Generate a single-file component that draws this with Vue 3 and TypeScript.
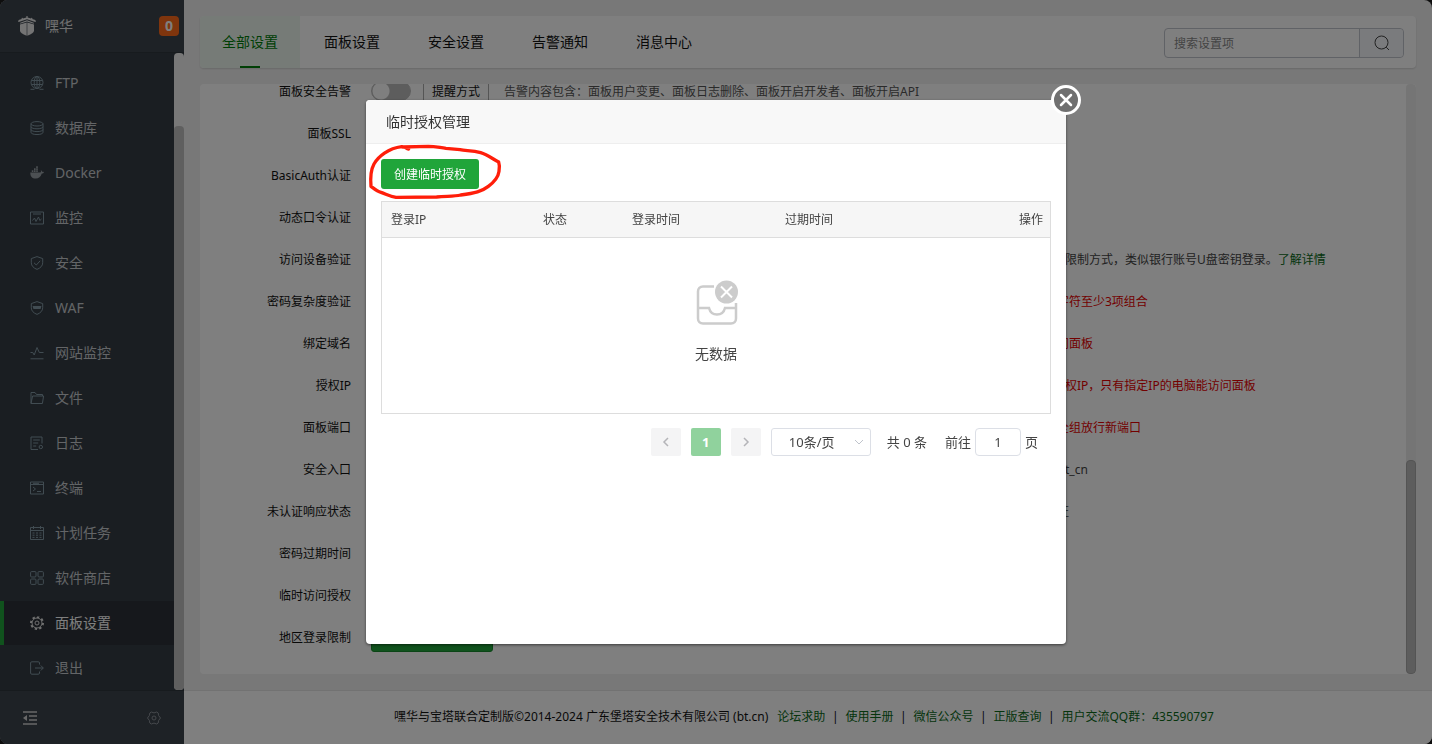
<script setup lang="ts">
import { ref } from 'vue'

interface MenuItem { label: string; icon: string; active?: boolean }
interface Row {
  label: string
  hint?: string
  tone?: 'red' | 'plain'
  link?: string
  wide?: boolean
  kind?: 'alarm' | 'region'
}

const menu: MenuItem[] = [
  { label: 'FTP', icon: 'ftp' },
  { label: '数据库', icon: 'db' },
  { label: 'Docker', icon: 'docker' },
  { label: '监控', icon: 'monitor' },
  { label: '安全', icon: 'safe' },
  { label: 'WAF', icon: 'waf' },
  { label: '网站监控', icon: 'pulse' },
  { label: '文件', icon: 'folder' },
  { label: '日志', icon: 'log' },
  { label: '终端', icon: 'terminal' },
  { label: '计划任务', icon: 'calendar' },
  { label: '软件商店', icon: 'store' },
  { label: '面板设置', icon: 'gear', active: true },
  { label: '退出', icon: 'exit' },
]

const tabs = ['全部设置', '面板设置', '安全设置', '告警通知', '消息中心']

const rows: Row[] = [
  { label: '面板安全告警', kind: 'alarm' },
  { label: '面板SSL' },
  { label: 'BasicAuth认证' },
  { label: '动态口令认证' },
  { label: '访问设备验证', hint: '限制方式，类似银行账号U盘密钥登录。', link: '了解详情', wide: true },
  { label: '密码复杂度验证', hint: '字符至少3项组合', tone: 'red' },
  { label: '绑定域名', hint: '问面板', tone: 'red' },
  { label: '授权IP', hint: '权IP，只有指定IP的电脑能访问面板', tone: 'red', wide: true },
  { label: '面板端口', hint: '全组放行新端口', tone: 'red' },
  { label: '安全入口', hint: 't_cn', wide: true },
  { label: '未认证响应状态', hint: '证' },
  { label: '密码过期时间' },
  { label: '临时访问授权' },
  { label: '地区登录限制', kind: 'region' },
]

const footerLinks = ['论坛求助', '使用手册', '微信公众号', '正版查询', '用户交流QQ群：435590797']
const pageSize = ref('10条/页')
const pageNo = ref('1')
const keyword = ref('')
const alarm = ref(false)
</script>

<template>
  <div class="app">
    <aside class="side">
      <header class="brand">
        <svg class="logo" viewBox="0 0 18 20" aria-hidden="true">
          <path d="M8.400 0h1.200v1.600l3.400 1 .6-.9.900.4-.3 1 3.200 1 .5 1.900-1.400-.3L9 3.200 1.500 5.700.1 6l.5-1.900 3.200-1-.3-1 .9-.4.6.9 3.400-1z" />
          <path d="M2.200 6.700L9 4.200l6.800 2.500v1L9 5.400 2.200 7.700z" />
          <path d="M2 8.600l6.700-2.200v13.400C4.300 17.900 2 16.800 2 14.800zM9.300 6.400L16 8.600v6.200c0 2-2.300 3.100-6.700 5z" />
        </svg>
        <span class="brand-name">嘿华</span>
        <span class="badge">0</span>
      </header>
      <div class="menu-wrap">
        <nav class="menu">
          <a v-for="m in menu" :key="m.label" href="#" class="item" :class="{ active: m.active }">
            <svg class="ico" viewBox="0 0 14 14" aria-hidden="true">
              <g v-if="m.icon === 'ftp'">
                <circle cx="7" cy="6.500" r="6" /><ellipse cx="7" cy="6.500" rx="2.800" ry="6" />
                <path d="M1.500 4.500h11M1.500 8.500h11M7 .5v12M.5 13.300h4M9.500 13.300h4" />
              </g>
              <g v-else-if="m.icon === 'db'">
                <ellipse cx="7" cy="2.800" rx="6" ry="2.200" />
                <path d="M1 2.800v8.500c0 3 12 3 12 0V2.800M1 5.700c0 2.800 12 2.800 12 0M1 8.500c0 2.800 12 2.800 12 0" />
              </g>
              <g v-else-if="m.icon === 'docker'" class="solid">
                <path d="M.3 6.500h9.900c.8-.2 1-1 .6-2.300.9.400 1.300 1 1.300 1.700.700-.200 1.300 0 1.900.300-.400.900-1.200 1.300-2.200 1.300C10.700 11 8.700 12.500 5.800 12.500 2 12.500.3 10.500.3 6.500z" />
                <path d="M1.800 4.300h1.600v1.600H1.800zM4 4.300h1.600v1.600H4zM6.200 4.300h1.600v1.600H6.200zM4 2.300h1.600v1.600H4zM6.200 2.300h1.600v1.600H6.200zM6.200.3h1.600v1.600H6.200z" />
              </g>
              <g v-else-if="m.icon === 'monitor'">
                <path d="M.5 1h13v12H.5zM3 3h8M2.500 9.500l2-2.500 1.500 3.500 2.500-4.500 1.300 3.500L11.500 8" />
              </g>
              <g v-else-if="m.icon === 'safe'">
                <path d="M7 .6l5.700 2v4.200c0 3-2.200 5.200-5.700 6.600C3.500 12 1.300 9.800 1.300 6.800V2.600zM4 6.800L6.300 9l3.900-4.200" />
              </g>
              <g v-else-if="m.icon === 'waf'">
                <path d="M7 .6l5.700 2v4.200c0 3-2.200 5.200-5.700 6.600C3.500 12 1.300 9.800 1.300 6.800V2.600z" />
                <path d="M3 5.500h8M3.500 7.500h7M3 5.500l1 2 1-2 1 2 1-2 1 2 1-2 1 2 1-2" />
              </g>
              <g v-else-if="m.icon === 'pulse'">
                <path d="M.5 6.500h2.300L4.200 9 7 1.500l2.300 5h4.200M.5 12.800h13" />
              </g>
              <g v-else-if="m.icon === 'folder'">
                <path d="M1 12.500V1.500h4l1.500 2h6V5M1 12.500L2.600 5h11l-1.200 7.500z" />
              </g>
              <g v-else-if="m.icon === 'log'">
                <path d="M12 7.500V1H1v12.500h7M3.200 4h6.600M3.200 7h5M3.200 10h3" /><circle cx="10.800" cy="11" r="1.700" />
              </g>
              <g v-else-if="m.icon === 'terminal'">
                <path d="M.5 1h13v12H.5zM.5 3.500h13M3 6l2.500 2L3 10M7 10.500h4M3 2.300h6" />
              </g>
              <g v-else-if="m.icon === 'calendar'">
                <path d="M.5 1.500h13v12H.5zM.5 4.500h13M3.500 0v3M10.500 0v3M2.500 7h2M6 7h2M9.500 7h2M2.500 9.200h2M6 9.200h2M9.500 9.200h2M2.500 11.400h2M6 11.400h2M9.500 11.400h2" />
              </g>
              <g v-else-if="m.icon === 'store'">
                <rect x=".6" y=".6" width="5.400" height="5.400" rx="1" /><rect x="8" y=".6" width="5.400" height="5.400" rx="1" />
                <rect x=".6" y="8" width="5.400" height="5.400" rx="1" /><rect x="8" y="8" width="5.400" height="5.400" rx="1" />
              </g>
              <g v-else-if="m.icon === 'gear'">
                <circle cx="7" cy="7" r="5" /><circle cx="7" cy="7" r="2" />
                <circle class="teeth" cx="7" cy="7" r="6" pathLength="80" />
              </g>
              <g v-else>
                <path d="M9.500 3.500V2c0-.8-.5-1.200-1.200-1.200H1.800C1 .8.6 1.200.6 2v10c0 .8.4 1.200 1.200 1.200h6.500c.7 0 1.200-.4 1.200-1.200v-1.500M5 7h8.200M10.800 4.500L13.300 7l-2.500 2.500" />
              </g>
            </svg>
            <span>{{ m.label }}</span>
          </a>
        </nav>
        <div class="side-track"><div class="side-thumb"></div></div>
      </div>
      <div class="side-foot">
        <button type="button" class="plain" aria-label="收起菜单">
          <svg width="14" height="14" viewBox="0 0 14 14" aria-hidden="true">
            <path class="bars" d="M0 1h14M6 5h8M6 9h8M0 13h14" /><path class="tri" d="M4 4v6L0 7z" />
          </svg>
        </button>
        <button type="button" class="plain dim" aria-label="菜单设置">
          <svg width="14" height="14" viewBox="0 0 14 14" aria-hidden="true">
            <path class="line" d="M4.300 1l2.700.9L9.700 1l1.500 1 .4 2.500L13.500 7l-1.900 2.500-.4 2.500-1.500 1-2.700-.9-2.700.9-1.500-1-.4-2.500L.5 7l1.900-2.500L2.800 2z" />
            <circle class="line" cx="7" cy="7" r="2" />
          </svg>
        </button>
      </div>
    </aside>

    <main class="main">
      <div class="body">
        <div class="tabs">
          <button v-for="(t, i) in tabs" :key="t" type="button" class="tab" :class="{ on: i === 0 }">{{ t }}</button>
          <form class="search">
            <input v-model="keyword" type="text" aria-label="搜索设置项" placeholder="搜索设置项" />
            <button type="button" aria-label="搜索">
              <svg width="16" height="16" viewBox="0 0 16 16" aria-hidden="true"><circle cx="7.500" cy="7.500" r="6.500" /><path d="M12.200 12.200L15 15" /></svg>
            </button>
          </form>
        </div>
        <section class="panel">
          <div v-for="r in rows" :key="r.label" class="row">
            <span class="label">{{ r.label }}</span>
            <template v-if="r.kind === 'alarm'">
              <input v-model="alarm" class="switch" type="checkbox" :aria-label="r.label" />
              <a href="#" class="method">提醒方式</a>
              <span class="note">告警内容包含：面板用户变更、面板日志删除、面板开启开发者、面板开启API</span>
            </template>
            <button v-else-if="r.kind === 'region'" type="button" class="region" aria-label="地区登录限制"></button>
            <template v-else-if="r.hint">
              <span class="control" :class="{ wide: r.wide }"></span>
              <span class="hint" :class="r.tone">{{ r.hint }}<a v-if="r.link" href="#">{{ r.link }}</a></span>
            </template>
          </div>
          <div class="track"><div class="thumb"></div></div>
        </section>
      </div>
      <footer class="foot">
        <span>嘿华与宝塔联合定制版©2014-2024 广东堡塔安全技术有限公司 (bt.cn)</span>
        <span class="links">
          <template v-for="(l, i) in footerLinks" :key="l"><i v-if="i">|</i><a href="#">{{ l }}</a></template>
        </span>
      </footer>
    </main>
  </div>

  <div class="shade">
    <div class="modal" role="dialog" aria-label="临时授权管理">
      <h2 class="title">临时授权管理</h2>
      <button type="button" class="close" aria-label="关闭">
        <svg width="14" height="14" viewBox="0 0 14 14" aria-hidden="true"><path d="M2 2l10 10M12 2L2 12" /></svg>
      </button>
      <div class="content">
        <button type="button" class="create">创建临时授权</button>
        <table class="grid">
          <thead>
            <tr><th class="c-ip">登录IP</th><th class="c-state">状态</th><th class="c-login">登录时间</th><th>过期时间</th><th class="c-op">操作</th></tr>
          </thead>
          <tbody>
            <tr>
              <td colspan="5">
                <div class="empty">
                  <svg width="44" height="48" viewBox="-1 -1 44 48" aria-hidden="true">
                    <path class="box" d="M19 7.500H8c-3 0-5 2-5 5v27c0 3 2 5 5 5h28c3 0 5-2 5-5V24M3 29h11c1 4 4 6.500 8 6.500s7-2.500 8-6.500h11" />
                    <circle cx="31.500" cy="13" r="11.500" />
                    <path class="cross" d="M26 7.500l11 11M37 7.500l-11 11" />
                  </svg>
                  <span>无数据</span>
                </div>
              </td>
            </tr>
          </tbody>
        </table>
        <div class="pager">
          <button type="button" class="pg" aria-label="上一页" disabled><svg width="8" height="10" viewBox="0 0 8 10"><path d="M6 1L2 5l4 4" /></svg></button>
          <button type="button" class="pg cur">1</button>
          <button type="button" class="pg" aria-label="下一页" disabled><svg width="8" height="10" viewBox="0 0 8 10"><path d="M2 1l4 4-4 4" /></svg></button>
          <span class="select">
            <select v-model="pageSize" aria-label="每页条数"><option>10条/页</option></select>
            <svg width="10" height="6" viewBox="0 0 10 6" aria-hidden="true"><path d="M1 1l4 4 4-4" /></svg>
          </span>
          <span class="total">共 0 条</span>
          <label class="jump">前往<input v-model="pageNo" type="text" />页</label>
        </div>
      </div>
      <svg class="mark" width="140" height="64" viewBox="18 180 420 192" aria-hidden="true">
        <path d="M146 207C138 208 138 199 125 200C85 205 55 230 42 252C31 272 31 296 33 319C45 328 52 334 63 337C80 343 90 349 108 352L230 351C260 348 282 350 302 345C345 339 366 334 385 319C405 304 415 290 417 274C419 262 419 254 416 246C400 238 382 224 362 218C335 211 316 213 300 209L258 205C235 202 225 199 205 199L128 201" />
      </svg>
    </div>
  </div>
</template>

<style>
body {
  background: #1c1c1c;
}
</style>

<style scoped>
* {
  box-sizing: border-box;
}
.app,
.shade {
  font: 12px/20px "Noto Sans", "Noto Sans CJK SC", sans-serif;
  color: #111;
}
button,
input,
select {
  font: inherit;
  color: inherit;
  margin: 0;
  padding: 0;
  border: 0;
  background: none;
}
a {
  color: #20a53a;
  text-decoration: none;
}
svg {
  fill: none;
}
.app {
  display: flex;
  height: 100vh;
  border-radius: 8px;
  overflow: hidden;
  background: #f1f1f1;
}
.side {
  flex: none;
  width: 184px;
  display: flex;
  flex-direction: column;
  background: #353d44;
}
.brand {
  display: flex;
  align-items: center;
  flex: none;
  height: 53px;
  padding: 0 5px 0 18px;
  background: #3c444d;
  border-bottom: 1px solid #2f363d;
  color: #e0e0e0;
  font-size: 14px;
}
.logo {
  width: 18px;
  height: 20px;
  fill: #e8e8e8;
}
.brand-name {
  flex: 1;
  padding-left: 9px;
}
.badge {
  width: 20px;
  height: 20px;
  border-radius: 4px;
  background: #ff6a1a;
  color: #fff;
  font-size: 14px;
  font-weight: 700;
  text-align: center;
}
.menu-wrap {
  flex: 1;
  min-height: 0;
  display: flex;
}
.menu {
  flex: 1;
  display: flex;
  flex-direction: column;
  gap: 1px;
  padding-top: 8px;
  overflow: hidden;
}
.item {
  flex: none;
  display: flex;
  align-items: center;
  gap: 11px;
  height: 44px;
  padding-left: 26px;
  border-left: 4px solid transparent;
  font-size: 14px;
  color: #c6cace;
}
.item.active {
  background: #2c3138;
  border-color: #20a53a;
  color: #fff;
}
.ico {
  width: 14px;
  height: 14px;
  stroke: #8298a4;
  stroke-width: 1;
}
.active .ico {
  stroke: #e0e0e0;
}
.ico .solid {
  fill: #98a0a6;
  stroke: none;
}
.teeth {
  stroke-width: 2;
  stroke-dasharray: 5 5;
}
.side-track {
  width: 10px;
  border-radius: 4px;
  background: #f1f1f1;
  display: flex;
  align-items: flex-end;
}
.side-thumb {
  width: 100%;
  height: 88.5%;
  border-radius: 4px;
  background: #bfbfbf;
}
.side-foot {
  flex: none;
  height: 54px;
  display: flex;
  align-items: center;
  justify-content: space-between;
  padding: 0 23px;
  background: #3c444d;
  border-top: 1px solid #2f363d;
}
.plain {
  display: flex;
  color: #d0d0d0;
}
.plain.dim {
  color: #8b9198;
}
.bars,
.line {
  stroke: currentColor;
}
.bars {
  stroke-width: 1.5;
}
.tri {
  fill: currentColor;
}
.main {
  flex: 1;
  min-width: 0;
  display: flex;
  flex-direction: column;
}
.body {
  flex: 1;
  min-height: 0;
  display: flex;
  flex-direction: column;
  gap: 16px;
  padding: 16px;
}
.tabs {
  flex: none;
  display: flex;
  height: 52px;
  border-radius: 4px;
  background: #fff;
  box-shadow: 0 1px 2px #0002;
  font-size: 14px;
}
.tab {
  width: 104px;
}
.tab.on {
  position: relative;
  width: 100px;
  background: #edf6ef;
  border-radius: 4px 0 0 4px;
  color: #007f0a;
}
.tab.on::after {
  content: "";
  position: absolute;
  left: 40px;
  bottom: 0;
  width: 20px;
  height: 2px;
  background: #007f0a;
}
.search {
  display: flex;
  width: 240px;
  height: 30px;
  margin: 12px 12px 0 auto;
  border: 1px solid #c0c4cc;
  border-radius: 4px;
  font-size: 12px;
}
.search input {
  flex: 1;
  min-width: 0;
  padding: 2px 9px 0;
}
.search input::placeholder {
  color: #888;
}
.search button {
  width: 44px;
  display: flex;
  align-items: center;
  justify-content: center;
  border-left: 1px solid #c0c4cc;
  background: #f5f7fa;
  border-radius: 0 4px 4px 0;
}
.search svg {
  stroke: #444;
}
.panel {
  position: relative;
  flex: 1;
  min-height: 0;
  display: flex;
  flex-direction: column;
  justify-content: flex-end;
  padding-bottom: 16px;
  border-radius: 4px;
  background: #fff;
  overflow: hidden;
}
.row {
  flex: none;
  display: flex;
  align-items: center;
  height: 42px;
  line-height: 14px;
  white-space: nowrap;
}
.label,
.note,
.hint {
  padding-top: 2px;
}
.label {
  width: 151px;
  margin-right: 20px;
  text-align: right;
}
.switch {
  appearance: none;
  width: 40px;
  height: 20px;
  border-radius: 10px;
  border: 1px solid #bbb;
  background: radial-gradient(circle at 9px 9px, #fff 8px, #bbb 9px);
}
.method {
  margin-left: 12px;
  padding: 4px 8px 2px;
  border: solid #aaa;
  border-width: 0 1px;
  color: #111;
}
.note {
  margin-left: 15px;
  color: #555;
}
.control {
  width: 686px;
}
.control.wide {
  width: 694px;
}
.hint {
  color: #444;
}
.hint.red {
  color: #e60000;
}
.hint a {
  color: #0a6a18;
}
.region {
  width: 122px;
  height: 30px;
  border-radius: 3px;
  background: #20a53a;
  border: 1px solid #168a2c;
}
.track {
  position: absolute;
  top: 0;
  right: 0;
  bottom: 0;
  width: 10px;
  display: flex;
  align-items: flex-end;
  border-radius: 4px;
  background: #ebebeb;
}
.thumb {
  width: 100%;
  height: 36.3%;
  border-radius: 4px;
  border: 1px solid #a8a8a8;
  background: #bbb;
}
.foot {
  flex: none;
  display: flex;
  align-items: center;
  justify-content: center;
  gap: 9px;
  height: 54px;
  padding: 0 8px 2px 0;
  border-top: 1px solid #e4e4e4;
  background: #fff;
  white-space: nowrap;
}
.links {
  display: flex;
}
.links a {
  color: #0a6a18;
}
.links i {
  width: 20px;
  font-style: normal;
  text-align: center;
}
.shade {
  position: fixed;
  inset: 0;
  display: flex;
  align-items: center;
  justify-content: center;
  background: rgba(0, 0, 0, 0.5);
}
.modal {
  position: relative;
  width: 700px;
  min-height: 544px;
  border-radius: 4px;
  background: #fff;
  box-shadow: 0 1px 3px #0008;
  color: #444;
}
.title {
  margin: 0;
  height: 44px;
  padding-left: 20px;
  border-bottom: 1px solid #eee;
  border-radius: 4px 4px 0 0;
  background: #f8f8f8;
  color: #333;
  font-size: 14px;
  font-weight: 400;
  line-height: 44px;
}
.close {
  position: absolute;
  top: -15px;
  right: -15px;
  width: 30px;
  height: 30px;
  display: flex;
  align-items: center;
  justify-content: center;
  border: 3px solid #fff;
  border-radius: 50%;
  background: #707070;
}
.close path {
  stroke: #fff;
  stroke-width: 2.5;
  stroke-linecap: round;
}
.content {
  padding: 15px;
}
.create {
  display: block;
  width: 98px;
  height: 30px;
  padding-top: 2px;
  border-radius: 3px;
  background: #20a53a;
  color: #fff;
}
.grid {
  width: 100%;
  margin-top: 12px;
  border: 1px solid #ddd;
  border-spacing: 0;
  table-layout: fixed;
}
th {
  height: 36px;
  padding: 0 9px;
  border-bottom: 1px solid #ddd;
  background: #f6f6f6;
  font-weight: 400;
  text-align: left;
}
.c-ip {
  width: 152px;
}
.c-state {
  width: 89px;
}
.c-login {
  width: 153px;
}
.c-op {
  padding-right: 7px;
  text-align: right;
}
td {
  height: 175px;
  padding: 0;
}
.empty {
  display: flex;
  flex-direction: column;
  align-items: center;
  gap: 18px;
  padding-bottom: 10px;
  font-size: 14px;
}
.empty .box {
  stroke: #ccc;
  stroke-width: 2.5;
}
.empty circle {
  fill: #ccc;
}
.empty .cross {
  stroke: #fff;
  stroke-width: 2;
}
.pager {
  display: flex;
  align-items: center;
  justify-content: flex-end;
  margin-top: 14px;
  padding-right: 13px;
  font-size: 13px;
}
.pg {
  width: 30px;
  height: 28px;
  margin-right: 10px;
  border-radius: 2px;
  background: #f4f4f5;
}
.pg path {
  stroke: #b4b4b8;
  stroke-width: 1.5;
}
.pg.cur {
  background: #90d29d;
  color: #fff;
  font-weight: 700;
}
.select {
  position: relative;
}
.select select {
  appearance: none;
  display: block;
  width: 100px;
  height: 28px;
  padding-left: 17px;
  border: 1px solid #dcdfe6;
  border-radius: 3px;
}
.select svg {
  position: absolute;
  top: 11px;
  right: 7px;
  stroke: #c0c4cc;
}
.total {
  margin: 0 18px 0 16px;
}
.jump input {
  width: 46px;
  height: 28px;
  margin: 0 4px;
  border: 1px solid #dcdfe6;
  border-radius: 4px;
  text-align: center;
}
.mark {
  position: absolute;
  top: 40px;
  left: 0;
  pointer-events: none;
}
.mark path {
  stroke: #ff1e0a;
  stroke-width: 10;
  stroke-linecap: round;
  stroke-linejoin: round;
}
</style>
